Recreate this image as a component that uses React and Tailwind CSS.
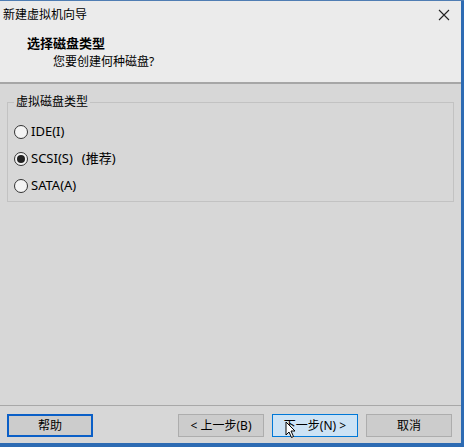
import React from 'react'

const font = { fontFamily: '"Noto Sans", "Noto Sans CJK SC", sans-serif' }

function Radio({ checked, label, extra }) {
  return (
    <div className="flex items-center h-[27px]">
      <span className="w-[14px] h-[14px] rounded-full border border-[#333] bg-[#f4f4f4] flex items-center justify-center">
        {checked && <span className="w-[8px] h-[8px] rounded-full bg-[#222]" />}
      </span>
      <span className="ml-[3px] text-[13px] text-black">{label}</span>
      {extra && <span className="ml-[9px] text-[13px] text-black">{extra}</span>}
    </div>
  )
}

function Btn({ children, variant, className = '' }) {
  const styles = {
    focus: 'border-2 border-[#0a5fc7] bg-[#cccccc]',
    hover: 'border border-[#0078d7] bg-[#cde3f5]',
    normal: 'border border-[#adadad] bg-[#cccccc]',
  }
  return (
    <button className={`relative h-[23px] w-[86px] flex items-center justify-center text-[12px] text-black ${styles[variant || 'normal']} ${className}`}>
      {children}
    </button>
  )
}

export default function App() {
  return (
    <div style={font} className="w-[464px] h-[447px] flex flex-col bg-[#d7d7d7] overflow-hidden">
      <div className="flex-1 flex border-t border-[#4f7db3]">
        <div className="flex-1 flex flex-col">
          {/* title bar */}
          <div className="h-[27px] bg-[#ebebeb] flex items-center justify-between pl-[3px] pr-[11px]">
            <span className="text-[12px] text-black">新建虚拟机向导</span>
            <svg width="12" height="12" viewBox="0 0 12 12">
              <path d="M1 1 L11 11 M11 1 L1 11" stroke="#222" strokeWidth="1.1" />
            </svg>
          </div>
          {/* header */}
          <div className="h-[56px] bg-[#ebebeb] flex flex-col pt-[6px] border-b-2 border-[#a6a6a6]">
            <div className="pl-[27px] text-[13px] font-bold text-black leading-[18px]">选择磁盘类型</div>
            <div className="pl-[53px] text-[12px] text-black leading-[18px] mt-[1px]">您要创建何种磁盘?</div>
          </div>
          {/* body */}
          <div className="flex-1 flex flex-col px-[7px] pt-[18px]">
            <div className="relative border border-[#c2c2c2] h-[100px] w-[447px] pt-[15px] pl-[6px]">
              <span className="absolute -top-[10px] left-[6px] px-[2px] bg-[#d7d7d7] text-[12px] text-black leading-[18px]">虚拟磁盘类型</span>
              <Radio label="IDE(I)" />
              <Radio checked label="SCSI(S)" extra="(推荐)" />
              <Radio label="SATA(A)" />
            </div>
          </div>
          {/* footer */}
          <div className="h-[38px] border-t border-[#a8a8a8] flex items-start pt-[8px] px-[7px]">
            <Btn variant="focus">帮助</Btn>
            <Btn className="ml-[85px]">&lt; 上一步(B)</Btn>
            <Btn variant="hover" className="ml-[8px]">
              下一步(N) &gt;
              <svg className="absolute left-[12px] top-[6px]" width="12" height="18" viewBox="0 0 12 18">
                <path d="M1 1 L1 14 L4 11 L6.5 16.5 L8.5 15.5 L6 10 L10 10 Z" fill="#fff" stroke="#000" strokeWidth="1" />
              </svg>
            </Btn>
            <Btn className="ml-[8px]">取消</Btn>
          </div>
        </div>
        <div className="w-[3px] bg-[#2d6bb3]" />
      </div>
      <div className="h-[4px] bg-[#2d6bb3]" />
    </div>
  )
}
